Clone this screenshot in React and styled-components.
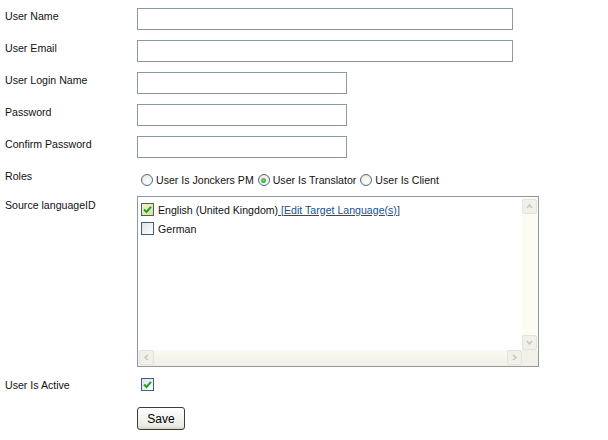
import React, {useState} from "react";
import styled, {createGlobalStyle} from "styled-components";

const Global = createGlobalStyle`
  body {
    margin: 0;
    background: #fff;
    font-family: "Liberation Sans", Arial, sans-serif;
    font-size: 10.6px;
    color: #111;
  }
`

const Form = styled.div`
  padding: 8px 0 0 5px;
  width: 608px;
  height: 440px;
  box-sizing: border-box;
`

const Row = styled.div`
  display: flex;
  align-items: flex-start;
  margin-bottom: ${p => p.gap || 10}px;
`

const Label = styled.div`
  width: 132px;
  flex: none;
  line-height: 14px;
  padding-top: ${p => p.top || 1}px;
`

const TextBox = styled.input`
  box-sizing: border-box;
  width: ${p => p.wide ? 376 : 210}px;
  height: 22px;
  margin: 0;
  border: 1px solid #8c98a4;
  background: #fff;
  padding: 2px 3px;
  font: inherit;
  outline: none;
`

const RadioGroup = styled.div`
  display: flex;
  align-items: center;
  height: 19px;
  padding-top: 5px;
  box-sizing: border-box;
  margin-left: 4px;
`

const RadioItem = styled.label`
  display: flex;
  align-items: center;
  margin-right: 4px;
  white-space: nowrap;
  cursor: pointer;
`

const RadioDot = styled.span`
  width: 12px;
  height: 12px;
  box-sizing: border-box;
  border-radius: 50%;
  border: 1px solid #4a6a8c;
  background: radial-gradient(circle at 60% 65%, #fff 0%, #f1efe6 60%, #dcd9cc 100%);
  margin-right: 3px;
  display: flex;
  align-items: center;
  justify-content: center;
  &::after {
    content: "";
    width: 5px;
    height: 5px;
    border-radius: 50%;
    background: ${p => p.on ? "radial-gradient(circle at 40% 40%, #6fd36f, #1e9a1e)" : "transparent"};
  }
`

const CheckBox = styled.span`
  width: 13px;
  height: 13px;
  box-sizing: border-box;
  border: 1px solid #3f5f80;
  background: ${p => p.hot ? "linear-gradient(135deg, #f5f1cf, #e4dc9c)" : "linear-gradient(135deg, #dde3ea, #fff)"};
  display: inline-flex;
  align-items: center;
  justify-content: center;
  flex: none;
  margin-left: ${p => p.indent || 0}px;
  margin-top: ${p => p.drop || 0}px;
  svg { display: block; }
`

const ListBox = styled.div`
  width: 402px;
  height: 171px;
  box-sizing: border-box;
  border: 1px solid #8c98a4;
  display: grid;
  grid-template-columns: 1fr 16px;
  grid-template-rows: 1fr 16px;
  background: #fff;
`

const ListBody = styled.div`
  padding: 6px 3px;
`

const ListRow = styled.div`
  display: flex;
  align-items: center;
  height: 13px;
  margin-bottom: 6px;
  white-space: nowrap;
  span.txt { margin-left: 4px; }
`

const EditLink = styled.a`
  color: #1d4f86;
  text-decoration: underline;
  cursor: pointer;
`

const VBar = styled.div`
  background: #fdfcf4;
  display: flex;
  flex-direction: column;
  justify-content: space-between;
  padding: 2px 0 0;
`

const HBar = styled.div`
  background: linear-gradient(#fbfaf2, #f1f0e6);
  display: flex;
  justify-content: space-between;
  padding-left: 1px;
`

const Corner = styled.div`
  background: #f2f1e8;
`

const ScrollBtn = styled.div`
  width: 15px;
  height: 15px;
  box-sizing: border-box;
  border: 1px solid #e4e3da;
  border-radius: 2px;
  background: #f1f0ea;
  color: #c8c8c2;
  display: flex;
  align-items: center;
  justify-content: center;
`

const SaveButton = styled.button`
  margin: 0;
  width: 48px;
  height: 23px;
  border: 1px solid #3c3c3c;
  border-radius: 3px;
  background: linear-gradient(#fefefe, #ecebe6 85%, #d6d0c5);
  font-family: "Liberation Sans", Arial, sans-serif;
  font-size: 12px;
  color: #000;
  padding: 0;
  cursor: pointer;
`

function Check() {
    return (
        <svg width="9" height="9" viewBox="0 0 9 9">
            <path d="M1 4.5 L3.5 7 L8 1.8" fill="none" stroke="#21a121" strokeWidth="2"/>
        </svg>
    )
}

function Chevron({dir}) {
    let paths = {
        up: "M3 7 L5.5 4 L8 7",
        down: "M3 4 L5.5 7 L8 4",
        left: "M7 3 L4 5.5 L7 8",
        right: "M4 3 L7 5.5 L4 8",
    }
    return (
        <svg width="11" height="11" viewBox="0 0 11 11">
            <path d={paths[dir]} fill="none" stroke="#c9c9c3" strokeWidth="1.6"/>
        </svg>
    )
}

function App() {
    let [role, role변경] = useState('translator');
    let roles = [
        {id: 'pm', text: 'User Is Jonckers PM'},
        {id: 'translator', text: 'User Is Translator'},
        {id: 'client', text: 'User Is Client'},
    ];

    return (
        <>
            <Global/>
            <Form>
                <Row><Label>User Name</Label><TextBox wide/></Row>
                <Row><Label>User Email</Label><TextBox wide/></Row>
                <Row><Label>User Login Name</Label><TextBox/></Row>
                <Row><Label>Password</Label><TextBox type="password"/></Row>
                <Row><Label>Confirm Password</Label><TextBox type="password"/></Row>
                <Row gap={9}>
                    <Label>Roles</Label>
                    <RadioGroup>
                        {roles.map((r) => (
                            <RadioItem key={r.id} onClick={() => role변경(r.id)}>
                                <RadioDot on={role === r.id}/>
                                {r.text}
                            </RadioItem>
                        ))}
                    </RadioGroup>
                </Row>
                <Row>
                    <Label top={2}>Source languageID</Label>
                    <ListBox>
                        <ListBody>
                            <ListRow>
                                <CheckBox hot><Check/></CheckBox>
                                <span className="txt">English (United Kingdom)<EditLink> [Edit Target Language(s)]</EditLink></span>
                            </ListRow>
                            <ListRow>
                                <CheckBox/>
                                <span className="txt">German</span>
                            </ListRow>
                        </ListBody>
                        <VBar>
                            <ScrollBtn><Chevron dir="up"/></ScrollBtn>
                            <ScrollBtn><Chevron dir="down"/></ScrollBtn>
                        </VBar>
                        <HBar>
                            <ScrollBtn><Chevron dir="left"/></ScrollBtn>
                            <ScrollBtn><Chevron dir="right"/></ScrollBtn>
                        </HBar>
                        <Corner/>
                    </ListBox>
                </Row>
                <Row gap={15}>
                    <Label>User Is Active</Label>
                    <CheckBox indent={4} drop={1}><Check/></CheckBox>
                </Row>
                <Row>
                    <Label/>
                    <SaveButton>Save</SaveButton>
                </Row>
            </Form>
        </>
    )
}

export default App;
